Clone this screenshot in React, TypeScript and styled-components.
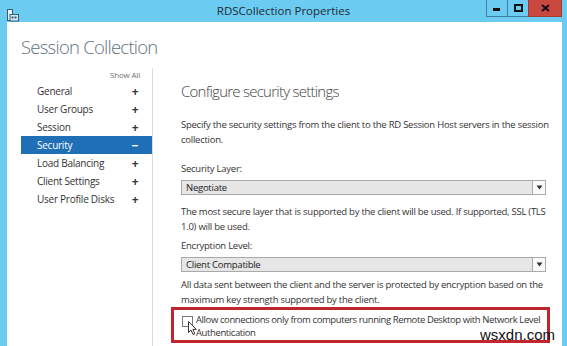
import React, { useState } from "react";
import styled, { createGlobalStyle } from "styled-components";

const GlobalStyle = createGlobalStyle`
  html, body {
    margin: 0;
    padding: 0;
    width: 567px;
    height: 346px;
    overflow: hidden;
  }
  body {
    font-family: "Open Sans", "Noto Sans", "Liberation Sans", sans-serif;
    color: #333;
  }
`;

const Window = styled.div`
  position: relative;
  width: 567px;
  height: 346px;
  background: #6ccbf1;
  display: flex;
  flex-direction: column;
`;

const TitleBar = styled.div`
  height: 22px;
  display: flex;
  align-items: flex-start;
  position: relative;
`;

const AppIcon = styled.div`
  width: 12px;
  height: 13px;
  margin: 5px 0 0 7px;
`;

const Title = styled.div`
  position: absolute;
  left: 0;
  right: 0;
  top: 3px;
  text-align: center;
  font-size: 11.5px;
  color: #1e2a33;
  pointer-events: none;
`;

const Controls = styled.div`
  margin-left: auto;
  margin-right: 5px;
  display: flex;
  height: 17px;
  z-index: 1;
`;

const CtrlButton = styled.div<{ $close?: boolean; $w: number }>`
  width: ${(p) => p.$w}px;
  height: 17px;
  box-sizing: border-box;
  border: 1px solid ${(p) => (p.$close ? "#a23b35" : "#3f7ea3")};
  border-top: none;
  margin-left: -1px;
  background: ${(p) => (p.$close ? "#c9483f" : "#6ccbf1")};
  display: flex;
  align-items: center;
  justify-content: center;
`;

const Body = styled.div`
  flex: 1;
  margin: 0 5px 0 7px;
  background: #fff;
  display: flex;
  overflow: hidden;
`;

const Sidebar = styled.div`
  width: 146px;
  padding-left: 14px;
  box-sizing: border-box;
  display: flex;
  flex-direction: column;
  flex-shrink: 0;
`;

const Heading = styled.div`
  margin-top: 13px;
  font-size: 18.5px;
  font-weight: 300;
  letter-spacing: -0.75px;
  color: #5f7180;
  white-space: nowrap;
  line-height: 24px;
`;

const NavBox = styled.div`
  margin-top: 9px;
  flex: 1;
  border-right: 1px solid #dcdcdc;
`;

const ShowAll = styled.div`
  text-align: right;
  font-size: 8px;
  color: #707070;
  padding-right: 12px;
  height: 14px;
  line-height: 14px;
  letter-spacing: -0.2px;
`;

const NavItem = styled.div<{ $active?: boolean }>`
  height: 18px;
  display: flex;
  align-items: center;
  padding: 0 13px 0 16px;
  font-size: 10px;
  letter-spacing: -0.25px;
  background: ${(p) => (p.$active ? "#1f6fb6" : "transparent")};
  color: ${(p) => (p.$active ? "#fff" : "#333")};
  span {
    flex: 1;
  }
  b {
    font-size: 12px;
    font-weight: 700;
    width: 8px;
    text-align: center;
  }
`;

const Main = styled.div`
  flex: 1;
  padding: 0 15px 0 28px;
  display: flex;
  flex-direction: column;
`;

const SectionTitle = styled.div`
  margin-top: 59px;
  font-size: 15px;
  font-weight: 300;
  letter-spacing: -0.75px;
  color: #444;
  line-height: 20px;
`;

const Para = styled.p<{ $mt: number }>`
  margin: ${(p) => p.$mt}px 0 0 0;
  font-size: 9.5px;
  line-height: 14.5px;
  letter-spacing: -0.25px;
  color: #333;
`;

const Label = styled.div<{ $mt: number }>`
  margin-top: ${(p) => p.$mt}px;
  font-size: 9.5px;
  line-height: 14px;
  letter-spacing: -0.25px;
  color: #333;
`;

const Select = styled.div`
  margin-top: 4px;
  height: 15px;
  width: 365px;
  box-sizing: border-box;
  border: 1px solid #a9a9a9;
  background: #e6e6e6;
  display: flex;
  align-items: center;
  font-size: 9.5px;
  letter-spacing: -0.25px;
  color: #222;
  span {
    flex: 1;
    padding-left: 4px;
  }
`;

const SelectArrow = styled.div`
  width: 12px;
  height: 100%;
  border-left: 1px solid #a9a9a9;
  background: #fafafa;
  display: flex;
  align-items: center;
  justify-content: center;
`;

const Highlight = styled.div`
  margin: 0 0 0 -10px;
  width: 379px;
  height: 36px;
  box-sizing: border-box;
  border: 3px solid #c2252d;
  padding: 3px 0 0 8px;
  display: flex;
  gap: 3px;
  position: relative;
`;

const CheckBox = styled.div`
  width: 11px;
  height: 11px;
  box-sizing: border-box;
  border: 1px solid #7a7a7a;
  background: #fff;
  flex-shrink: 0;
  margin-top: 3px;
`;

const CheckText = styled.div`
  font-size: 9.5px;
  line-height: 13px;
  letter-spacing: -0.4px;
  white-space: nowrap;
  color: #333;
`;

const Cursor = styled.svg`
  position: absolute;
  left: 14px;
  top: 11px;
`;

const Watermark = styled.div`
  position: absolute;
  right: 12px;
  bottom: 3px;
  font-family: "Liberation Sans", Arial, sans-serif;
  font-size: 15px;
  color: #111;
`;

const items = [
  "General",
  "User Groups",
  "Session",
  "Security",
  "Load Balancing",
  "Client Settings",
  "User Profile Disks",
];

const Arrow = () => (
  <svg width="7" height="5" viewBox="0 0 7 5">
    <path d="M0.5 0.5 H6.5 L3.5 4.5 Z" fill="#333" />
  </svg>
);

export default function App() {
  const [active] = useState("Security");

  return (
    <Window>
      <GlobalStyle />
      <TitleBar>
        <AppIcon>
          <svg width="12" height="13" viewBox="0 0 12 13">
            <rect x="0.5" y="0.5" width="5" height="11" fill="#e8f4fb" stroke="#2f5f80" />
            <rect x="3" y="5.5" width="8.5" height="6.5" fill="#dbe9f3" stroke="#2f5f80" />
            <rect x="4.5" y="7.5" width="2" height="2" fill="#2f5f80" />
            <rect x="7.5" y="7.5" width="2" height="2" fill="#2f5f80" />
          </svg>
        </AppIcon>
        <Title>RDSCollection Properties</Title>
        <Controls>
          <CtrlButton $w={22}>
            <svg width="8" height="8" viewBox="0 0 8 8">
              <rect x="0" y="4" width="7" height="3" fill="#111" />
            </svg>
          </CtrlButton>
          <CtrlButton $w={22}>
            <svg width="9" height="8" viewBox="0 0 9 8">
              <rect x="1" y="1" width="7" height="6" fill="none" stroke="#111" strokeWidth="2" />
            </svg>
          </CtrlButton>
          <CtrlButton $close $w={34}>
            <svg width="9" height="8" viewBox="0 0 9 8">
              <path d="M1 1 L8 7 M8 1 L1 7" stroke="#111" strokeWidth="2" />
            </svg>
          </CtrlButton>
        </Controls>
      </TitleBar>
      <Body>
        <Sidebar>
          <Heading>Session Collection</Heading>
          <NavBox>
            <ShowAll>Show All</ShowAll>
            {items.map((name) => (
              <NavItem key={name} $active={name === active}>
                <span>{name}</span>
                <b>{name === active ? "−" : "+"}</b>
              </NavItem>
            ))}
          </NavBox>
        </Sidebar>
        <Main>
          <SectionTitle>Configure security settings</SectionTitle>
          <Para $mt={17}>
            Specify the security settings from the client to the RD Session Host servers in the session
            collection.
          </Para>
          <Label $mt={15}>Security Layer:</Label>
          <Select>
            <span>Negotiate</span>
            <SelectArrow>
              <Arrow />
            </SelectArrow>
          </Select>
          <Para $mt={10}>
            The most secure layer that is supported by the client will be used. If supported, SSL (TLS
            1.0) will be used.
          </Para>
          <Label $mt={5}>Encryption Level:</Label>
          <Select>
            <span>Client Compatible</span>
            <SelectArrow>
              <Arrow />
            </SelectArrow>
          </Select>
          <Para $mt={6}>
            All data sent between the client and the server is protected by encryption based on the
            maximum key strength supported by the client.
          </Para>
          <Highlight>
            <CheckBox />
            <CheckText>
              Allow connections only from computers running Remote Desktop with Network Level
              <br />
              Authentication
            </CheckText>
            <Cursor width="10" height="15" viewBox="0 0 10 15">
              <path
                d="M0.5 0.5 L0.5 11.5 L3 9 L5 13.5 L6.8 12.7 L4.9 8.4 L8.3 8.4 Z"
                fill="#fff"
                stroke="#333"
                strokeWidth="1"
              />
            </Cursor>
          </Highlight>
        </Main>
      </Body>
      <Watermark>wsxdn.com</Watermark>
    </Window>
  );
}
